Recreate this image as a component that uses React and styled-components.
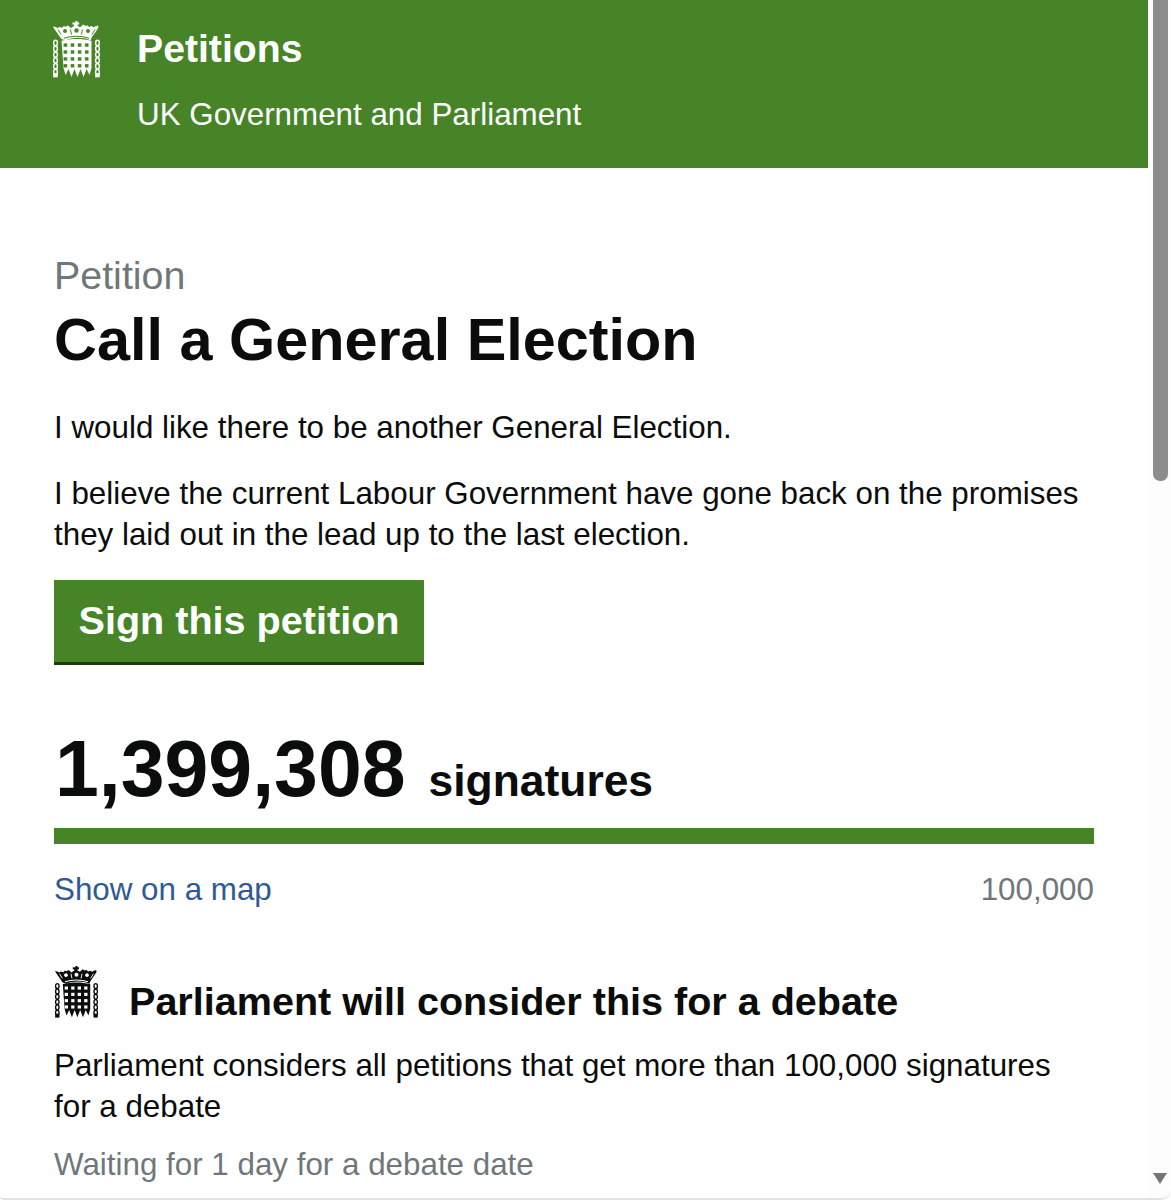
import React from "react";
import styled, { createGlobalStyle } from "styled-components";

const Global = createGlobalStyle`
  html, body { margin: 0; padding: 0; background: #fff; overflow: hidden; }
  body { font-family: "Liberation Sans", Arial, sans-serif; color: #0b0c0c; }
`;
const Page = styled.div`
  display: flex; width: 1171px; height: 1200px; overflow: hidden; box-sizing: border-box;
  border-bottom: 2px solid #e2e2e2; border-radius: 0 0 10px 4px;
`;
const Main = styled.main`
  width: 1148px; overflow: hidden; flex: none;
`;
const Header = styled.header`
  height: 168px; background: #468427; color: #fff; display: flex;
  padding: 21px 0 0 53px; box-sizing: border-box;
`;
const HeaderText = styled.div`
  margin-left: 37px;
`;
const Brand = styled.div`
  font-size: 39.2px; font-weight: 700; line-height: 56px;
`;
const Sub = styled.div`
  font-size: 31.35px; line-height: 40px; margin-top: 18px;
`;
const Content = styled.div`
  padding: 84px 54px 0 54px;
`;
const Kicker = styled.div`
  font-size: 39.4px; line-height: 46px; color: #6f777b;
`;
const Title = styled.h1`
  font-size: 59.4px; line-height: 70px; margin: 7px 0 0; font-weight: 700;
`;
const Para = styled.p`
  font-size: 31.35px; line-height: 41px; margin: ${p => p.$top || 25}px 0 0;
`;
const Button = styled.div`
  display: inline-block; margin-top: 25px; background: #468427; color: #fff;
  font-size: 39.6px; font-weight: 700; line-height: 44px; height: 85px;
  padding: 18px 24.5px 0; box-sizing: border-box; border-bottom: 3px solid #1e3a10;
`;
const Count = styled.div`
  display: flex; align-items: baseline; margin-top: 60px; font-weight: 700;
`;
const Number = styled.span`
  font-size: 78.8px; line-height: 88px; margin-left: 1px;
`;
const CountLabel = styled.span`
  font-size: 44.4px; margin-left: 23px;
`;
const Bar = styled.div`
  height: 16px; width: 1040px; background: #468427; margin-top: 15px;
`;
const BarFoot = styled.div`
  display: flex; justify-content: space-between; width: 1040px;
  font-size: 31.35px; line-height: 40px; margin-top: 26px;
`;
const MapLink = styled.a`
  color: #2e5a96; text-decoration: none;
`;
const Threshold = styled.span`
  color: #6f777b;
`;
const Heading = styled.div`
  display: flex; align-items: flex-start; margin-top: 56px; padding-left: 1px;
`;
const HeadingText = styled.h2`
  font-size: 39.55px; line-height: 48px; font-weight: 700; margin: 11px 0 0 31px;
`;
const Waiting = styled.div`
  font-size: 31.35px; line-height: 40px; color: #6f777b; margin-top: 18px;
`;
const Track = styled.div`
  flex: 1; position: relative; background: #fdfdfd;
`;
const Thumb = styled.div`
  position: absolute; left: 5px; top: 0; width: 15px; height: 481px;
  background: #8c8c8c; border-radius: 0 0 7px 7px;
`;
const Arrow = styled.div`
  position: absolute; left: 5px; top: 1173px; width: 0; height: 0;
  border-left: 7.5px solid transparent; border-right: 7.5px solid transparent;
  border-top: 11px solid #757575;
`;

function Chain({ x, color }) {
  return (
    <g fill="none" stroke={color}>
      {[0, 1, 2, 3, 4, 5].map(i => (
        <ellipse key={i} cx={x} cy={22 + i * 5.8} rx="1.9" ry="2.7" strokeWidth="1.5" />
      ))}
      <rect x={x - 2} y="52.5" width="4" height="3.5" fill={color} strokeWidth="0.6" />
    </g>
  );
}

function Portcullis({ color, bg, width = 47 }) {
  const holes = [];
  for (let r = 0; r < 4; r++) {
    for (let c = 0; c < 4; c++) {
      holes.push(<rect key={`h${r}-${c}`} x={10.6 + c * 7.1} y={22.4 + r * 6.9} width="3.6" height="3.4" fill={bg} />);
    }
  }
  return (
    <svg width={width} height={width * 57 / 47} viewBox="0 0 47 57" style={{ flex: "none" }}>
      <path d="M22.4 0h2.2v1.5h1.6v2h-1.6V5l2.6 1.2 3-2.6 2.5 1.4 1.6-.8 1.8 1.800 2.500-.9 1.800 1.200 2.200-1 2.400-.9.4 2.200-2.800 4.300-3.600 5.200-1.400 3.200c-7.500-3.300-17.700-3.300-25.200 0L8.400 18 4.800 12.800 1 7.500 0 5.500l2.600.6 2.200 1 1.800-1.200 2.500.9 1.800-1.800 1.600.8 2.500-1.400 3 2.600L21 5V3.500h-1.600v-2H22.400z" fill={color} />
      <circle cx="12" cy="10" r="2" fill={bg} />
      <circle cx="23.500" cy="9.500" r="2.200" fill={bg} />
      <circle cx="35" cy="10" r="2" fill={bg} />
      <path d="M5 8.500l3 5M42 8.500l-3 5M17.500 8.500l1 5M29.500 8.500l-1 5" stroke={bg} strokeWidth="1" />
      <path d="M11 17.200c7-2.600 18-2.600 25 0" stroke={bg} strokeWidth="1.100" fill="none" />
      <path d="M8.500 19.800c9-2.400 21-2.400 30 0V47l-2 7-2.900-6-3 8-3.100-8-3 8-3-8-3 8-3-8-2.900 6-2.100-7z" fill={color} />
      {holes}
      <Chain x={2.500} color={color} />
      <Chain x={44.500} color={color} />
    </svg>
  );
}

export default function App() {
  return (
    <Page>
      <Global />
      <Main>
        <Header>
          <Portcullis color="#fff" bg="#468427" />
          <HeaderText>
            <Brand>Petitions</Brand>
            <Sub>UK Government and Parliament</Sub>
          </HeaderText>
        </Header>
        <Content>
          <Kicker>Petition</Kicker>
          <Title>Call a General Election</Title>
          <Para $top={32}>I would like there to be another General Election.</Para>
          <Para>I believe the current Labour Government have gone back on the promises they laid out in the lead up to the last election.</Para>
          <Button>Sign this petition</Button>
          <Count>
            <Number>1,399,308</Number>
            <CountLabel>signatures</CountLabel>
          </Count>
          <Bar />
          <BarFoot>
            <MapLink href="#">Show on a map</MapLink>
            <Threshold>100,000</Threshold>
          </BarFoot>
          <Heading>
            <Portcullis color="#0b0c0c" bg="#fff" width={43} />
            <HeadingText>Parliament will consider this for a debate</HeadingText>
          </Heading>
          <Para $top={20}>Parliament considers all petitions that get more than 100,000 signatures for a debate</Para>
          <Waiting>Waiting for 1 day for a debate date</Waiting>
        </Content>
      </Main>
      <Track>
        <Thumb />
        <Arrow />
      </Track>
    </Page>
  );
}
